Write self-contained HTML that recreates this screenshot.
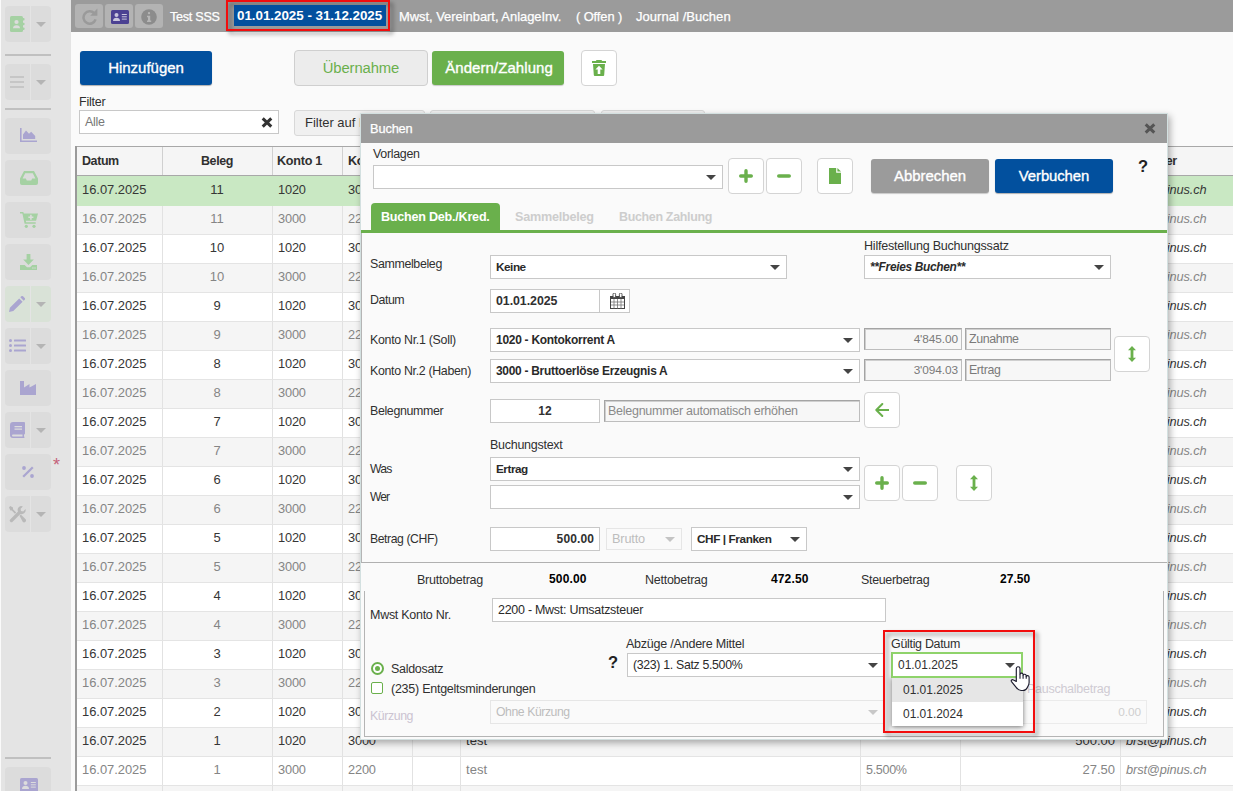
<!DOCTYPE html>
<html lang="de"><head><meta charset="utf-8"><title>Journal /Buchen</title>
<style>
html,body{margin:0;padding:0}
body{width:1233px;height:791px;overflow:hidden;position:relative;background:#fafafa;font-family:"Liberation Sans",sans-serif;font-size:13px;color:#303030;line-height:1}
*{box-sizing:border-box}
.a{position:absolute}
.t{position:absolute;white-space:nowrap;line-height:16px;height:16px}
.b{font-weight:bold}
.i{font-style:italic}
.sb{position:absolute;left:5px;width:46px;height:36px;background:#dcdcdc;border-radius:4px}
.sb i{position:absolute;left:25px;top:0;width:1px;height:36px;background:#e4e4e4}
.sb u{position:absolute;left:31px;top:16px;width:0;height:0;border-left:5px solid transparent;border-right:5px solid transparent;border-top:5px solid #b4b4b4}
.hr{position:absolute;left:5px;width:46px;height:2px;background:#c0c0c0}
.tb{position:absolute;top:4px;width:28px;height:24px;background:#b3b3b3;border-radius:3px}
.sel{position:absolute;background:#fff;border:1px solid #c8c8c8;height:24px}
.car{position:absolute;width:0;height:0;border-left:5px solid transparent;border-right:5px solid transparent;border-top:5px solid #444}
.ro{position:absolute;background:#f7f7f7;border:1px solid #a4a4a4;border-right-color:#bdbdbd;border-bottom-color:#bdbdbd;height:22px;box-shadow:inset 1px 1px 0 #cfcfcf}
.ib{position:absolute;width:36px;height:36px;background:#fff;border:1px solid #d4d4d4;border-radius:4px}
.row{position:absolute;left:77px;width:1156px;height:29px;border-top:1px solid #e4e4e4}
.row.e{background:#f5f5f5}
.row.o{background:#fff}
.row.s{background:#c9e8c3;border-top:none}
.g{color:#888}
.vl{position:absolute;top:147px;width:1px;height:644px;background:#e2e2e2}
</style></head>
<body>
<div class="a" style="left:1px;top:0;width:70px;height:791px;background:#e4e4e4"></div>
<div class="a" style="left:71px;top:0;width:1162px;height:32px;background:#9b9b9b"></div>
<div class="sb" style="top:6px;background:#dcdcdc"><i></i><u></u></div>
<svg class="a" style="left:10px;top:16px;" width="15" height="16" viewBox="0 0 15 16"><rect x="0" y="0" width="13" height="16" rx="1.5" fill="#a5d1a3"/><rect x="12.5" y="2" width="2" height="2.6" rx=".8" fill="#a5d1a3"/><rect x="12.5" y="6.7" width="2" height="2.6" rx=".8" fill="#a5d1a3"/><rect x="12.5" y="11.4" width="2" height="2.6" rx=".8" fill="#a5d1a3"/><circle cx="6.5" cy="6" r="2.1" fill="#dcdcdc"/><path d="M3 12.2c0-2 1.3-3 3.5-3s3.5 1 3.5 3z" fill="#dcdcdc"/></svg>
<div class="hr" style="top:54px"></div>
<div class="sb" style="top:64px;background:#dcdcdc"><i></i><u></u></div>
<div class="a" style="left:10px;top:76px;width:14px;height:2px;background:#c6c6c6"></div>
<div class="a" style="left:10px;top:81px;width:14px;height:2px;background:#c6c6c6"></div>
<div class="a" style="left:10px;top:86px;width:14px;height:2px;background:#c6c6c6"></div>
<div class="hr" style="top:108px"></div>
<div class="sb" style="top:118px;background:#dcdcdc"></div>
<svg class="a" style="left:20px;top:128px;" width="17" height="14" viewBox="0 0 17 14"><path d="M0 0h1.6v12.4H17V14H0z" fill="#aaa5d0"/><path d="M3 11V6.5l3-4 3 3.2 2.2-2 4 4.3V11z" fill="#aaa5d0"/></svg>
<div class="sb" style="top:160px;background:#dcdcdc"></div>
<svg class="a" style="left:20px;top:171px;" width="18" height="14" viewBox="0 0 18 14"><path d="M4 0h10l4 7.5V12a2 2 0 0 1-2 2H2a2 2 0 0 1-2-2V7.5zM5.2 2.2L2.6 7.4h3.2l1 2h4.4l1-2h3.2L12.8 2.2z" fill="#a5d1a3" fill-rule="evenodd"/></svg>
<div class="sb" style="top:202px;background:#dcdcdc"></div>
<svg class="a" style="left:20px;top:212px;" width="18" height="16" viewBox="0 0 18 16"><path d="M0 0h3.3l.5 1.6H18l-1.9 7.2H5.8l.3 1.4h9.6v1.6H4.6L2.4 1.6H0z" fill="#a5d1a3"/><circle cx="6.3" cy="14.3" r="1.6" fill="#a5d1a3"/><circle cx="14" cy="14.3" r="1.6" fill="#a5d1a3"/><path d="M10.1 2.7h1.6v1.7h1.7V6h-1.7v1.7h-1.6V6H8.4V4.4h1.7z" fill="#dcdcdc"/></svg>
<div class="sb" style="top:244px;background:#dcdcdc"></div>
<svg class="a" style="left:20px;top:254px;" width="17" height="16" viewBox="0 0 17 16"><path d="M6.6 0h3.8v5.6h3.4L8.5 11 3.2 5.600h3.400z" fill="#a5d1a3"/><path d="M0 11h4.600l2.400 2.300h3l2.400-2.300H17V16H0z" fill="#a5d1a3"/><rect x="12.300" y="13.400" width="1.200" height="1.200" fill="#dcdcdc"/><rect x="14.400" y="13.400" width="1.200" height="1.200" fill="#dcdcdc"/></svg>
<div class="sb" style="top:286px;background:#d9e2d7"><i></i><u></u></div>
<svg class="a" style="left:9px;top:296px;" width="16" height="16" viewBox="0 0 16 16"><path d="M0 16l.9-4.300L10.200 2.400l3.400 3.400L4.300 15.100zM11.300 1.300l1-1a1.200 1.200 0 0 1 1.700 0l1.700 1.700a1.200 1.200 0 0 1 0 1.700l-1 1z" fill="#aaa5d0"/></svg>
<div class="sb" style="top:328px;background:#dcdcdc"><i></i><u></u></div>
<svg class="a" style="left:9px;top:339px;" width="17" height="13" viewBox="0 0 17 13"><circle cx="1.500" cy="1.500" r="1.500" fill="#aaa5d0"/><circle cx="1.500" cy="6.500" r="1.500" fill="#aaa5d0"/><circle cx="1.500" cy="11.500" r="1.500" fill="#aaa5d0"/><rect x="5" y=".5" width="12" height="2" rx=".5" fill="#aaa5d0"/><rect x="5" y="5.500" width="12" height="2" rx=".5" fill="#aaa5d0"/><rect x="5" y="10.500" width="12" height="2" rx=".5" fill="#aaa5d0"/></svg>
<div class="sb" style="top:370px;background:#dcdcdc"></div>
<svg class="a" style="left:20px;top:381px;" width="16" height="14" viewBox="0 0 16 14"><path d="M0 0h4v6.500L9.500 3v3.500L16 3v11H0z" fill="#aaa5d0"/></svg>
<div class="sb" style="top:412px;background:#dcdcdc"><i></i><u></u></div>
<svg class="a" style="left:10px;top:422px;" width="15" height="16" viewBox="0 0 15 16"><path d="M3 0h11a1 1 0 0 1 1 1v10.500a1 1 0 0 1-1 1v2a.8.800 0 0 1 0 1.500H3a3 3 0 0 1-3-3V3a3 3 0 0 1 3-3zM3 12.500a1 1 0 0 0 0 2h9.500v-2zM4.500 4v1.200h7.500V4zM4.500 6.500v1.200h7.500V6.500z" fill="#aaa5d0" fill-rule="evenodd"/></svg>
<div class="sb" style="top:454px;background:#dcdcdc"></div>
<svg class="a" style="left:22px;top:466px;" width="12" height="12" viewBox="0 0 12 12"><circle cx="2" cy="2" r="1.900" fill="#aaa5d0"/><circle cx="10" cy="10" r="1.900" fill="#aaa5d0"/><path d="M10 .4L11.600 2 2 11.600.4 10z" fill="#aaa5d0"/></svg>
<div class="t" style="left:53px;top:457px;font-size:18.00px;letter-spacing:0.000px;color:#c4627a;">*</div>
<div class="sb" style="top:496px;background:#dcdcdc"><i></i><u></u></div>
<svg class="a" style="left:9px;top:506px;" width="17" height="17" viewBox="0 0 17 17"><path d="M1.200 0L4 1.600v1.600l3.200 3.200-1.300 1.300L2.800 4.500H1.400L0 1.500zM11.900 0a4 4 0 0 1 2 .500L11.600 2.800l.4 2.200 2.200.400L16.500 3.100A4 4 0 0 1 11.400 8L3.600 15.800a1.700 1.700 0 0 1-2.400-2.400L9 5.600A4 4 0 0 1 11.900 0zM10.500 9.800l1.300-1.300 4.600 4.600a1.900 1.900 0 0 1-2.700 2.700z" fill="#b9b9b9"/></svg>
<div class="hr" style="top:757px"></div>
<div class="sb" style="top:767px;background:#dcdcdc"></div>
<svg class="a" style="left:20px;top:778px;" width="18" height="14" viewBox="0 0 18 14"><rect width="18" height="14" rx="1.500" fill="#aaa5d0"/><circle cx="5.500" cy="5" r="2" fill="#dcdcdc"/><path d="M2 11c0-2.200 1.400-3.200 3.500-3.200S9 8.800 9 11z" fill="#dcdcdc"/><rect x="10.800" y="4" width="5" height="1" fill="#dcdcdc"/><rect x="10.800" y="6.300" width="5" height="1" fill="#dcdcdc"/><rect x="10.800" y="8.600" width="5" height="1" fill="#dcdcdc"/></svg>
<div class="tb" style="left:75px"></div>
<div class="tb" style="left:105px"></div>
<div class="tb" style="left:135px"></div>
<svg class="a" style="left:81px;top:8px;" width="17" height="17" viewBox="0 0 17 17"><path d="M13.300 5.300A6.200 6.200 0 1 0 14.600 11.400" fill="none" stroke="#9a9a9a" stroke-width="2.500"/><path d="M16.400 .600v7.200H9.200z" fill="#9a9a9a"/></svg>
<svg class="a" style="left:111px;top:10px;" width="18" height="14" viewBox="0 0 18 14"><rect width="18" height="14" rx="1.500" fill="#4b4192"/><circle cx="5.500" cy="5" r="2" fill="#c9c6dd"/><path d="M2 11c0-2.200 1.400-3.200 3.500-3.200S9 8.800 9 11z" fill="#c9c6dd"/><rect x="10.800" y="4" width="5" height="1" fill="#c9c6dd"/><rect x="10.800" y="6.300" width="5" height="1" fill="#c9c6dd"/><rect x="10.800" y="8.600" width="5" height="1" fill="#c9c6dd"/></svg>
<svg class="a" style="left:141px;top:9px;" width="16" height="16" viewBox="0 0 16 16"><circle cx="8" cy="8" r="7.800" fill="#8c8c8c"/><rect x="6.900" y="3" width="2.200" height="2.200" rx="1" fill="#b6b6b6"/><path d="M6 6.800h3.200v4.700h1V13H6v-1.500h1V8.300H6z" fill="#b6b6b6"/></svg>
<div class="t" style="left:170px;top:9px;font-size:12.58px;letter-spacing:-0.250px;color:#fff;-webkit-text-stroke:.25px #fff;">Test SSS</div>
<div class="a" style="left:226px;top:0;width:164px;height:31px;border:2px solid #f20d0d;filter:drop-shadow(3px 3px 2px rgba(0,0,0,.42))"></div>
<div class="a" style="left:234px;top:5px;width:152px;height:21px;background:#02509e"></div>
<div class="t b" style="left:237px;top:8px;font-size:13.42px;letter-spacing:-0.040px;color:#fff;">01.01.2025 - 31.12.2025</div>
<div class="t" style="left:399px;top:9px;font-size:12.94px;letter-spacing:-0.026px;color:#fff;-webkit-text-stroke:.25px #fff;">Mwst, Vereinbart, AnlageInv.</div>
<div class="t" style="left:576px;top:9px;font-size:12.83px;letter-spacing:-0.078px;color:#fff;-webkit-text-stroke:.25px #fff;">( Offen )</div>
<div class="t" style="left:636px;top:9px;font-size:13.00px;letter-spacing:0.048px;color:#fff;-webkit-text-stroke:.25px #fff;">Journal /Buchen</div>
<div class="a" style="left:80px;top:51px;width:132px;height:34px;background:#02509e;border-radius:3px;box-shadow:0 1px 1px rgba(0,0,0,.3)"></div>
<div class="t" style="left:80px;top:60px;font-size:14.99px;letter-spacing:-0.006px;color:#fff;width:132px;text-align:center;padding-left:-0.006px;-webkit-text-stroke:.35px #fff;">Hinzufügen</div>
<div class="a" style="left:294px;top:50px;width:134px;height:36px;background:#ececec;border:1px solid #cfcfcf;border-radius:4px"></div>
<div class="t" style="left:294px;top:60px;font-size:14.83px;letter-spacing:-0.111px;color:#6ab04c;width:134px;text-align:center;padding-left:-0.111px;">Übernahme</div>
<div class="a" style="left:432px;top:51px;width:132px;height:34px;background:#6ab04c;border-radius:3px;box-shadow:0 1px 1px rgba(0,0,0,.2)"></div>
<div class="t" style="left:433px;top:60px;font-size:15.00px;letter-spacing:0.067px;color:#fff;width:132px;text-align:center;padding-left:0.067px;-webkit-text-stroke:.35px #fff;">Ändern/Zahlung</div>
<div class="ib" style="left:581px;top:50px"></div>
<div class="t" style="left:79px;top:94px;font-size:12.48px;letter-spacing:-0.231px;">Filter</div>
<div class="a" style="left:79px;top:110px;width:200px;height:24px;background:#fff;border:1px solid #c8c8c8"></div>
<div class="t" style="left:85px;top:114px;font-size:12.48px;letter-spacing:-0.289px;color:#777;">Alle</div>
<svg class="a" style="left:261px;top:117px;" width="12" height="11" viewBox="0 0 12 11"><path d="M1.700 1.400l8.600 8.200M10.300 1.400l-8.600 8.200" stroke="#333" stroke-width="3" stroke-linecap="butt"/></svg>
<div class="a" style="left:294px;top:110px;width:131px;height:26px;background:#f0f0f0;border:1px solid #d8d8d8;border-radius:3px"></div>
<div class="a" style="left:430px;top:110px;width:165px;height:26px;background:#f0f0f0;border:1px solid #d8d8d8;border-radius:3px"></div>
<div class="a" style="left:601px;top:110px;width:104px;height:26px;background:#f0f0f0;border:1px solid #d8d8d8;border-radius:3px"></div>
<div class="t" style="left:305px;top:115px;font-size:12.98px;letter-spacing:-0.010px;">Filter auf Datum</div>
<div class="a" style="left:75px;top:146px;width:1158px;height:645px;background:#fff"></div>
<div class="a" style="left:77px;top:147px;width:1156px;height:28px;background:#f5f5f5"></div>
<div class="vl" style="left:162px"></div>
<div class="vl" style="left:272px"></div>
<div class="vl" style="left:342px"></div>
<div class="vl" style="left:412px"></div>
<div class="vl" style="left:460px"></div>
<div class="vl" style="left:860px"></div>
<div class="vl" style="left:960px"></div>
<div class="vl" style="left:1120px"></div>
<div class="row s" style="top:176px"></div>
<div class="t" style="left:82px;top:182px;font-size:12.94px;letter-spacing:-0.031px;color:#363636;">16.07.2025</div>
<div class="t" style="left:162px;top:182px;font-size:13.00px;letter-spacing:0.000px;color:#363636;width:110px;text-align:center;padding-left:0.000px;">11</div>
<div class="t" style="left:278px;top:182px;font-size:12.79px;letter-spacing:-0.154px;color:#363636;">1020</div>
<div class="t" style="left:348px;top:182px;font-size:12.79px;letter-spacing:-0.154px;color:#363636;">3000</div>
<div class="t" style="left:466px;top:182px;font-size:13.00px;letter-spacing:0.023px;color:#363636;">test</div>
<div class="t" style="left:866px;top:182px;font-size:13.00px;letter-spacing:41.000px;color:#363636;"></div>
<div class="t" style="left:961px;top:182px;font-size:13.00px;letter-spacing:0.000px;color:#363636;width:154px;text-align:right;margin-left:0.000px;">500.00</div>
<div class="t i" style="left:1126px;top:182px;font-size:12.79px;letter-spacing:-0.111px;color:#363636;">brst@pinus.ch</div>
<div class="row e" style="top:205px;border-top-color:#c9e8c3"></div>
<div class="a" style="left:162px;top:206px;width:1px;height:28px;background:#e2e2e2"></div>
<div class="a" style="left:272px;top:206px;width:1px;height:28px;background:#e2e2e2"></div>
<div class="a" style="left:342px;top:206px;width:1px;height:28px;background:#e2e2e2"></div>
<div class="a" style="left:412px;top:206px;width:1px;height:28px;background:#e2e2e2"></div>
<div class="a" style="left:460px;top:206px;width:1px;height:28px;background:#e2e2e2"></div>
<div class="a" style="left:860px;top:206px;width:1px;height:28px;background:#e2e2e2"></div>
<div class="a" style="left:960px;top:206px;width:1px;height:28px;background:#e2e2e2"></div>
<div class="a" style="left:1120px;top:206px;width:1px;height:28px;background:#e2e2e2"></div>
<div class="t" style="left:82px;top:211px;font-size:12.94px;letter-spacing:-0.031px;color:#858585;">16.07.2025</div>
<div class="t" style="left:162px;top:211px;font-size:13.00px;letter-spacing:0.000px;color:#858585;width:110px;text-align:center;padding-left:0.000px;">11</div>
<div class="t" style="left:278px;top:211px;font-size:12.79px;letter-spacing:-0.154px;color:#858585;">3000</div>
<div class="t" style="left:348px;top:211px;font-size:12.79px;letter-spacing:-0.154px;color:#858585;">2200</div>
<div class="t" style="left:466px;top:211px;font-size:13.00px;letter-spacing:0.023px;color:#858585;">test</div>
<div class="t" style="left:866px;top:211px;font-size:12.55px;letter-spacing:-0.307px;color:#858585;">5.500%</div>
<div class="t" style="left:961px;top:211px;font-size:13.00px;letter-spacing:0.000px;color:#858585;width:154px;text-align:right;margin-left:0.000px;">27.50</div>
<div class="t i" style="left:1126px;top:211px;font-size:12.79px;letter-spacing:-0.111px;color:#858585;">brst@pinus.ch</div>
<div class="row o" style="top:234px"></div>
<div class="a" style="left:162px;top:235px;width:1px;height:28px;background:#e2e2e2"></div>
<div class="a" style="left:272px;top:235px;width:1px;height:28px;background:#e2e2e2"></div>
<div class="a" style="left:342px;top:235px;width:1px;height:28px;background:#e2e2e2"></div>
<div class="a" style="left:412px;top:235px;width:1px;height:28px;background:#e2e2e2"></div>
<div class="a" style="left:460px;top:235px;width:1px;height:28px;background:#e2e2e2"></div>
<div class="a" style="left:860px;top:235px;width:1px;height:28px;background:#e2e2e2"></div>
<div class="a" style="left:960px;top:235px;width:1px;height:28px;background:#e2e2e2"></div>
<div class="a" style="left:1120px;top:235px;width:1px;height:28px;background:#e2e2e2"></div>
<div class="t" style="left:82px;top:240px;font-size:12.94px;letter-spacing:-0.031px;color:#363636;">16.07.2025</div>
<div class="t" style="left:162px;top:240px;font-size:13.00px;letter-spacing:0.000px;color:#363636;width:110px;text-align:center;padding-left:0.000px;">10</div>
<div class="t" style="left:278px;top:240px;font-size:12.79px;letter-spacing:-0.154px;color:#363636;">1020</div>
<div class="t" style="left:348px;top:240px;font-size:12.79px;letter-spacing:-0.154px;color:#363636;">3000</div>
<div class="t" style="left:466px;top:240px;font-size:13.00px;letter-spacing:0.023px;color:#363636;">test</div>
<div class="t" style="left:866px;top:240px;font-size:13.00px;letter-spacing:41.000px;color:#363636;"></div>
<div class="t" style="left:961px;top:240px;font-size:13.00px;letter-spacing:0.000px;color:#363636;width:154px;text-align:right;margin-left:0.000px;">500.00</div>
<div class="t i" style="left:1126px;top:240px;font-size:12.79px;letter-spacing:-0.111px;color:#363636;">brst@pinus.ch</div>
<div class="row e" style="top:263px"></div>
<div class="a" style="left:162px;top:264px;width:1px;height:28px;background:#e2e2e2"></div>
<div class="a" style="left:272px;top:264px;width:1px;height:28px;background:#e2e2e2"></div>
<div class="a" style="left:342px;top:264px;width:1px;height:28px;background:#e2e2e2"></div>
<div class="a" style="left:412px;top:264px;width:1px;height:28px;background:#e2e2e2"></div>
<div class="a" style="left:460px;top:264px;width:1px;height:28px;background:#e2e2e2"></div>
<div class="a" style="left:860px;top:264px;width:1px;height:28px;background:#e2e2e2"></div>
<div class="a" style="left:960px;top:264px;width:1px;height:28px;background:#e2e2e2"></div>
<div class="a" style="left:1120px;top:264px;width:1px;height:28px;background:#e2e2e2"></div>
<div class="t" style="left:82px;top:269px;font-size:12.94px;letter-spacing:-0.031px;color:#858585;">16.07.2025</div>
<div class="t" style="left:162px;top:269px;font-size:13.00px;letter-spacing:0.000px;color:#858585;width:110px;text-align:center;padding-left:0.000px;">10</div>
<div class="t" style="left:278px;top:269px;font-size:12.79px;letter-spacing:-0.154px;color:#858585;">3000</div>
<div class="t" style="left:348px;top:269px;font-size:12.79px;letter-spacing:-0.154px;color:#858585;">2200</div>
<div class="t" style="left:466px;top:269px;font-size:13.00px;letter-spacing:0.023px;color:#858585;">test</div>
<div class="t" style="left:866px;top:269px;font-size:12.55px;letter-spacing:-0.307px;color:#858585;">5.500%</div>
<div class="t" style="left:961px;top:269px;font-size:13.00px;letter-spacing:0.000px;color:#858585;width:154px;text-align:right;margin-left:0.000px;">27.50</div>
<div class="t i" style="left:1126px;top:269px;font-size:12.79px;letter-spacing:-0.111px;color:#858585;">brst@pinus.ch</div>
<div class="row o" style="top:292px"></div>
<div class="a" style="left:162px;top:293px;width:1px;height:28px;background:#e2e2e2"></div>
<div class="a" style="left:272px;top:293px;width:1px;height:28px;background:#e2e2e2"></div>
<div class="a" style="left:342px;top:293px;width:1px;height:28px;background:#e2e2e2"></div>
<div class="a" style="left:412px;top:293px;width:1px;height:28px;background:#e2e2e2"></div>
<div class="a" style="left:460px;top:293px;width:1px;height:28px;background:#e2e2e2"></div>
<div class="a" style="left:860px;top:293px;width:1px;height:28px;background:#e2e2e2"></div>
<div class="a" style="left:960px;top:293px;width:1px;height:28px;background:#e2e2e2"></div>
<div class="a" style="left:1120px;top:293px;width:1px;height:28px;background:#e2e2e2"></div>
<div class="t" style="left:82px;top:298px;font-size:12.94px;letter-spacing:-0.031px;color:#363636;">16.07.2025</div>
<div class="t" style="left:162px;top:298px;font-size:13.00px;letter-spacing:0.000px;color:#363636;width:110px;text-align:center;padding-left:0.000px;">9</div>
<div class="t" style="left:278px;top:298px;font-size:12.79px;letter-spacing:-0.154px;color:#363636;">1020</div>
<div class="t" style="left:348px;top:298px;font-size:12.79px;letter-spacing:-0.154px;color:#363636;">3000</div>
<div class="t" style="left:466px;top:298px;font-size:13.00px;letter-spacing:0.023px;color:#363636;">test</div>
<div class="t" style="left:866px;top:298px;font-size:13.00px;letter-spacing:41.000px;color:#363636;"></div>
<div class="t" style="left:961px;top:298px;font-size:13.00px;letter-spacing:0.000px;color:#363636;width:154px;text-align:right;margin-left:0.000px;">500.00</div>
<div class="t i" style="left:1126px;top:298px;font-size:12.79px;letter-spacing:-0.111px;color:#363636;">brst@pinus.ch</div>
<div class="row e" style="top:321px"></div>
<div class="a" style="left:162px;top:322px;width:1px;height:28px;background:#e2e2e2"></div>
<div class="a" style="left:272px;top:322px;width:1px;height:28px;background:#e2e2e2"></div>
<div class="a" style="left:342px;top:322px;width:1px;height:28px;background:#e2e2e2"></div>
<div class="a" style="left:412px;top:322px;width:1px;height:28px;background:#e2e2e2"></div>
<div class="a" style="left:460px;top:322px;width:1px;height:28px;background:#e2e2e2"></div>
<div class="a" style="left:860px;top:322px;width:1px;height:28px;background:#e2e2e2"></div>
<div class="a" style="left:960px;top:322px;width:1px;height:28px;background:#e2e2e2"></div>
<div class="a" style="left:1120px;top:322px;width:1px;height:28px;background:#e2e2e2"></div>
<div class="t" style="left:82px;top:327px;font-size:12.94px;letter-spacing:-0.031px;color:#858585;">16.07.2025</div>
<div class="t" style="left:162px;top:327px;font-size:13.00px;letter-spacing:0.000px;color:#858585;width:110px;text-align:center;padding-left:0.000px;">9</div>
<div class="t" style="left:278px;top:327px;font-size:12.79px;letter-spacing:-0.154px;color:#858585;">3000</div>
<div class="t" style="left:348px;top:327px;font-size:12.79px;letter-spacing:-0.154px;color:#858585;">2200</div>
<div class="t" style="left:466px;top:327px;font-size:13.00px;letter-spacing:0.023px;color:#858585;">test</div>
<div class="t" style="left:866px;top:327px;font-size:12.55px;letter-spacing:-0.307px;color:#858585;">5.500%</div>
<div class="t" style="left:961px;top:327px;font-size:13.00px;letter-spacing:0.000px;color:#858585;width:154px;text-align:right;margin-left:0.000px;">27.50</div>
<div class="t i" style="left:1126px;top:327px;font-size:12.79px;letter-spacing:-0.111px;color:#858585;">brst@pinus.ch</div>
<div class="row o" style="top:350px"></div>
<div class="a" style="left:162px;top:351px;width:1px;height:28px;background:#e2e2e2"></div>
<div class="a" style="left:272px;top:351px;width:1px;height:28px;background:#e2e2e2"></div>
<div class="a" style="left:342px;top:351px;width:1px;height:28px;background:#e2e2e2"></div>
<div class="a" style="left:412px;top:351px;width:1px;height:28px;background:#e2e2e2"></div>
<div class="a" style="left:460px;top:351px;width:1px;height:28px;background:#e2e2e2"></div>
<div class="a" style="left:860px;top:351px;width:1px;height:28px;background:#e2e2e2"></div>
<div class="a" style="left:960px;top:351px;width:1px;height:28px;background:#e2e2e2"></div>
<div class="a" style="left:1120px;top:351px;width:1px;height:28px;background:#e2e2e2"></div>
<div class="t" style="left:82px;top:356px;font-size:12.94px;letter-spacing:-0.031px;color:#363636;">16.07.2025</div>
<div class="t" style="left:162px;top:356px;font-size:13.00px;letter-spacing:0.000px;color:#363636;width:110px;text-align:center;padding-left:0.000px;">8</div>
<div class="t" style="left:278px;top:356px;font-size:12.79px;letter-spacing:-0.154px;color:#363636;">1020</div>
<div class="t" style="left:348px;top:356px;font-size:12.79px;letter-spacing:-0.154px;color:#363636;">3000</div>
<div class="t" style="left:466px;top:356px;font-size:13.00px;letter-spacing:0.023px;color:#363636;">test</div>
<div class="t" style="left:866px;top:356px;font-size:13.00px;letter-spacing:41.000px;color:#363636;"></div>
<div class="t" style="left:961px;top:356px;font-size:13.00px;letter-spacing:0.000px;color:#363636;width:154px;text-align:right;margin-left:0.000px;">500.00</div>
<div class="t i" style="left:1126px;top:356px;font-size:12.79px;letter-spacing:-0.111px;color:#363636;">brst@pinus.ch</div>
<div class="row e" style="top:379px"></div>
<div class="a" style="left:162px;top:380px;width:1px;height:28px;background:#e2e2e2"></div>
<div class="a" style="left:272px;top:380px;width:1px;height:28px;background:#e2e2e2"></div>
<div class="a" style="left:342px;top:380px;width:1px;height:28px;background:#e2e2e2"></div>
<div class="a" style="left:412px;top:380px;width:1px;height:28px;background:#e2e2e2"></div>
<div class="a" style="left:460px;top:380px;width:1px;height:28px;background:#e2e2e2"></div>
<div class="a" style="left:860px;top:380px;width:1px;height:28px;background:#e2e2e2"></div>
<div class="a" style="left:960px;top:380px;width:1px;height:28px;background:#e2e2e2"></div>
<div class="a" style="left:1120px;top:380px;width:1px;height:28px;background:#e2e2e2"></div>
<div class="t" style="left:82px;top:385px;font-size:12.94px;letter-spacing:-0.031px;color:#858585;">16.07.2025</div>
<div class="t" style="left:162px;top:385px;font-size:13.00px;letter-spacing:0.000px;color:#858585;width:110px;text-align:center;padding-left:0.000px;">8</div>
<div class="t" style="left:278px;top:385px;font-size:12.79px;letter-spacing:-0.154px;color:#858585;">3000</div>
<div class="t" style="left:348px;top:385px;font-size:12.79px;letter-spacing:-0.154px;color:#858585;">2200</div>
<div class="t" style="left:466px;top:385px;font-size:13.00px;letter-spacing:0.023px;color:#858585;">test</div>
<div class="t" style="left:866px;top:385px;font-size:12.55px;letter-spacing:-0.307px;color:#858585;">5.500%</div>
<div class="t" style="left:961px;top:385px;font-size:13.00px;letter-spacing:0.000px;color:#858585;width:154px;text-align:right;margin-left:0.000px;">27.50</div>
<div class="t i" style="left:1126px;top:385px;font-size:12.79px;letter-spacing:-0.111px;color:#858585;">brst@pinus.ch</div>
<div class="row o" style="top:408px"></div>
<div class="a" style="left:162px;top:409px;width:1px;height:28px;background:#e2e2e2"></div>
<div class="a" style="left:272px;top:409px;width:1px;height:28px;background:#e2e2e2"></div>
<div class="a" style="left:342px;top:409px;width:1px;height:28px;background:#e2e2e2"></div>
<div class="a" style="left:412px;top:409px;width:1px;height:28px;background:#e2e2e2"></div>
<div class="a" style="left:460px;top:409px;width:1px;height:28px;background:#e2e2e2"></div>
<div class="a" style="left:860px;top:409px;width:1px;height:28px;background:#e2e2e2"></div>
<div class="a" style="left:960px;top:409px;width:1px;height:28px;background:#e2e2e2"></div>
<div class="a" style="left:1120px;top:409px;width:1px;height:28px;background:#e2e2e2"></div>
<div class="t" style="left:82px;top:414px;font-size:12.94px;letter-spacing:-0.031px;color:#363636;">16.07.2025</div>
<div class="t" style="left:162px;top:414px;font-size:13.00px;letter-spacing:0.000px;color:#363636;width:110px;text-align:center;padding-left:0.000px;">7</div>
<div class="t" style="left:278px;top:414px;font-size:12.79px;letter-spacing:-0.154px;color:#363636;">1020</div>
<div class="t" style="left:348px;top:414px;font-size:12.79px;letter-spacing:-0.154px;color:#363636;">3000</div>
<div class="t" style="left:466px;top:414px;font-size:13.00px;letter-spacing:0.023px;color:#363636;">test</div>
<div class="t" style="left:866px;top:414px;font-size:13.00px;letter-spacing:41.000px;color:#363636;"></div>
<div class="t" style="left:961px;top:414px;font-size:13.00px;letter-spacing:0.000px;color:#363636;width:154px;text-align:right;margin-left:0.000px;">500.00</div>
<div class="t i" style="left:1126px;top:414px;font-size:12.79px;letter-spacing:-0.111px;color:#363636;">brst@pinus.ch</div>
<div class="row e" style="top:437px"></div>
<div class="a" style="left:162px;top:438px;width:1px;height:28px;background:#e2e2e2"></div>
<div class="a" style="left:272px;top:438px;width:1px;height:28px;background:#e2e2e2"></div>
<div class="a" style="left:342px;top:438px;width:1px;height:28px;background:#e2e2e2"></div>
<div class="a" style="left:412px;top:438px;width:1px;height:28px;background:#e2e2e2"></div>
<div class="a" style="left:460px;top:438px;width:1px;height:28px;background:#e2e2e2"></div>
<div class="a" style="left:860px;top:438px;width:1px;height:28px;background:#e2e2e2"></div>
<div class="a" style="left:960px;top:438px;width:1px;height:28px;background:#e2e2e2"></div>
<div class="a" style="left:1120px;top:438px;width:1px;height:28px;background:#e2e2e2"></div>
<div class="t" style="left:82px;top:443px;font-size:12.94px;letter-spacing:-0.031px;color:#858585;">16.07.2025</div>
<div class="t" style="left:162px;top:443px;font-size:13.00px;letter-spacing:0.000px;color:#858585;width:110px;text-align:center;padding-left:0.000px;">7</div>
<div class="t" style="left:278px;top:443px;font-size:12.79px;letter-spacing:-0.154px;color:#858585;">3000</div>
<div class="t" style="left:348px;top:443px;font-size:12.79px;letter-spacing:-0.154px;color:#858585;">2200</div>
<div class="t" style="left:466px;top:443px;font-size:13.00px;letter-spacing:0.023px;color:#858585;">test</div>
<div class="t" style="left:866px;top:443px;font-size:12.55px;letter-spacing:-0.307px;color:#858585;">5.500%</div>
<div class="t" style="left:961px;top:443px;font-size:13.00px;letter-spacing:0.000px;color:#858585;width:154px;text-align:right;margin-left:0.000px;">27.50</div>
<div class="t i" style="left:1126px;top:443px;font-size:12.79px;letter-spacing:-0.111px;color:#858585;">brst@pinus.ch</div>
<div class="row o" style="top:466px"></div>
<div class="a" style="left:162px;top:467px;width:1px;height:28px;background:#e2e2e2"></div>
<div class="a" style="left:272px;top:467px;width:1px;height:28px;background:#e2e2e2"></div>
<div class="a" style="left:342px;top:467px;width:1px;height:28px;background:#e2e2e2"></div>
<div class="a" style="left:412px;top:467px;width:1px;height:28px;background:#e2e2e2"></div>
<div class="a" style="left:460px;top:467px;width:1px;height:28px;background:#e2e2e2"></div>
<div class="a" style="left:860px;top:467px;width:1px;height:28px;background:#e2e2e2"></div>
<div class="a" style="left:960px;top:467px;width:1px;height:28px;background:#e2e2e2"></div>
<div class="a" style="left:1120px;top:467px;width:1px;height:28px;background:#e2e2e2"></div>
<div class="t" style="left:82px;top:472px;font-size:12.94px;letter-spacing:-0.031px;color:#363636;">16.07.2025</div>
<div class="t" style="left:162px;top:472px;font-size:13.00px;letter-spacing:0.000px;color:#363636;width:110px;text-align:center;padding-left:0.000px;">6</div>
<div class="t" style="left:278px;top:472px;font-size:12.79px;letter-spacing:-0.154px;color:#363636;">1020</div>
<div class="t" style="left:348px;top:472px;font-size:12.79px;letter-spacing:-0.154px;color:#363636;">3000</div>
<div class="t" style="left:466px;top:472px;font-size:13.00px;letter-spacing:0.023px;color:#363636;">test</div>
<div class="t" style="left:866px;top:472px;font-size:13.00px;letter-spacing:41.000px;color:#363636;"></div>
<div class="t" style="left:961px;top:472px;font-size:13.00px;letter-spacing:0.000px;color:#363636;width:154px;text-align:right;margin-left:0.000px;">500.00</div>
<div class="t i" style="left:1126px;top:472px;font-size:12.79px;letter-spacing:-0.111px;color:#363636;">brst@pinus.ch</div>
<div class="row e" style="top:495px"></div>
<div class="a" style="left:162px;top:496px;width:1px;height:28px;background:#e2e2e2"></div>
<div class="a" style="left:272px;top:496px;width:1px;height:28px;background:#e2e2e2"></div>
<div class="a" style="left:342px;top:496px;width:1px;height:28px;background:#e2e2e2"></div>
<div class="a" style="left:412px;top:496px;width:1px;height:28px;background:#e2e2e2"></div>
<div class="a" style="left:460px;top:496px;width:1px;height:28px;background:#e2e2e2"></div>
<div class="a" style="left:860px;top:496px;width:1px;height:28px;background:#e2e2e2"></div>
<div class="a" style="left:960px;top:496px;width:1px;height:28px;background:#e2e2e2"></div>
<div class="a" style="left:1120px;top:496px;width:1px;height:28px;background:#e2e2e2"></div>
<div class="t" style="left:82px;top:501px;font-size:12.94px;letter-spacing:-0.031px;color:#858585;">16.07.2025</div>
<div class="t" style="left:162px;top:501px;font-size:13.00px;letter-spacing:0.000px;color:#858585;width:110px;text-align:center;padding-left:0.000px;">6</div>
<div class="t" style="left:278px;top:501px;font-size:12.79px;letter-spacing:-0.154px;color:#858585;">3000</div>
<div class="t" style="left:348px;top:501px;font-size:12.79px;letter-spacing:-0.154px;color:#858585;">2200</div>
<div class="t" style="left:466px;top:501px;font-size:13.00px;letter-spacing:0.023px;color:#858585;">test</div>
<div class="t" style="left:866px;top:501px;font-size:12.55px;letter-spacing:-0.307px;color:#858585;">5.500%</div>
<div class="t" style="left:961px;top:501px;font-size:13.00px;letter-spacing:0.000px;color:#858585;width:154px;text-align:right;margin-left:0.000px;">27.50</div>
<div class="t i" style="left:1126px;top:501px;font-size:12.79px;letter-spacing:-0.111px;color:#858585;">brst@pinus.ch</div>
<div class="row o" style="top:524px"></div>
<div class="a" style="left:162px;top:525px;width:1px;height:28px;background:#e2e2e2"></div>
<div class="a" style="left:272px;top:525px;width:1px;height:28px;background:#e2e2e2"></div>
<div class="a" style="left:342px;top:525px;width:1px;height:28px;background:#e2e2e2"></div>
<div class="a" style="left:412px;top:525px;width:1px;height:28px;background:#e2e2e2"></div>
<div class="a" style="left:460px;top:525px;width:1px;height:28px;background:#e2e2e2"></div>
<div class="a" style="left:860px;top:525px;width:1px;height:28px;background:#e2e2e2"></div>
<div class="a" style="left:960px;top:525px;width:1px;height:28px;background:#e2e2e2"></div>
<div class="a" style="left:1120px;top:525px;width:1px;height:28px;background:#e2e2e2"></div>
<div class="t" style="left:82px;top:530px;font-size:12.94px;letter-spacing:-0.031px;color:#363636;">16.07.2025</div>
<div class="t" style="left:162px;top:530px;font-size:13.00px;letter-spacing:0.000px;color:#363636;width:110px;text-align:center;padding-left:0.000px;">5</div>
<div class="t" style="left:278px;top:530px;font-size:12.79px;letter-spacing:-0.154px;color:#363636;">1020</div>
<div class="t" style="left:348px;top:530px;font-size:12.79px;letter-spacing:-0.154px;color:#363636;">3000</div>
<div class="t" style="left:466px;top:530px;font-size:13.00px;letter-spacing:0.023px;color:#363636;">test</div>
<div class="t" style="left:866px;top:530px;font-size:13.00px;letter-spacing:41.000px;color:#363636;"></div>
<div class="t" style="left:961px;top:530px;font-size:13.00px;letter-spacing:0.000px;color:#363636;width:154px;text-align:right;margin-left:0.000px;">500.00</div>
<div class="t i" style="left:1126px;top:530px;font-size:12.79px;letter-spacing:-0.111px;color:#363636;">brst@pinus.ch</div>
<div class="row e" style="top:553px"></div>
<div class="a" style="left:162px;top:554px;width:1px;height:28px;background:#e2e2e2"></div>
<div class="a" style="left:272px;top:554px;width:1px;height:28px;background:#e2e2e2"></div>
<div class="a" style="left:342px;top:554px;width:1px;height:28px;background:#e2e2e2"></div>
<div class="a" style="left:412px;top:554px;width:1px;height:28px;background:#e2e2e2"></div>
<div class="a" style="left:460px;top:554px;width:1px;height:28px;background:#e2e2e2"></div>
<div class="a" style="left:860px;top:554px;width:1px;height:28px;background:#e2e2e2"></div>
<div class="a" style="left:960px;top:554px;width:1px;height:28px;background:#e2e2e2"></div>
<div class="a" style="left:1120px;top:554px;width:1px;height:28px;background:#e2e2e2"></div>
<div class="t" style="left:82px;top:559px;font-size:12.94px;letter-spacing:-0.031px;color:#858585;">16.07.2025</div>
<div class="t" style="left:162px;top:559px;font-size:13.00px;letter-spacing:0.000px;color:#858585;width:110px;text-align:center;padding-left:0.000px;">5</div>
<div class="t" style="left:278px;top:559px;font-size:12.79px;letter-spacing:-0.154px;color:#858585;">3000</div>
<div class="t" style="left:348px;top:559px;font-size:12.79px;letter-spacing:-0.154px;color:#858585;">2200</div>
<div class="t" style="left:466px;top:559px;font-size:13.00px;letter-spacing:0.023px;color:#858585;">test</div>
<div class="t" style="left:866px;top:559px;font-size:12.55px;letter-spacing:-0.307px;color:#858585;">5.500%</div>
<div class="t" style="left:961px;top:559px;font-size:13.00px;letter-spacing:0.000px;color:#858585;width:154px;text-align:right;margin-left:0.000px;">27.50</div>
<div class="t i" style="left:1126px;top:559px;font-size:12.79px;letter-spacing:-0.111px;color:#858585;">brst@pinus.ch</div>
<div class="row o" style="top:582px"></div>
<div class="a" style="left:162px;top:583px;width:1px;height:28px;background:#e2e2e2"></div>
<div class="a" style="left:272px;top:583px;width:1px;height:28px;background:#e2e2e2"></div>
<div class="a" style="left:342px;top:583px;width:1px;height:28px;background:#e2e2e2"></div>
<div class="a" style="left:412px;top:583px;width:1px;height:28px;background:#e2e2e2"></div>
<div class="a" style="left:460px;top:583px;width:1px;height:28px;background:#e2e2e2"></div>
<div class="a" style="left:860px;top:583px;width:1px;height:28px;background:#e2e2e2"></div>
<div class="a" style="left:960px;top:583px;width:1px;height:28px;background:#e2e2e2"></div>
<div class="a" style="left:1120px;top:583px;width:1px;height:28px;background:#e2e2e2"></div>
<div class="t" style="left:82px;top:588px;font-size:12.94px;letter-spacing:-0.031px;color:#363636;">16.07.2025</div>
<div class="t" style="left:162px;top:588px;font-size:13.00px;letter-spacing:0.000px;color:#363636;width:110px;text-align:center;padding-left:0.000px;">4</div>
<div class="t" style="left:278px;top:588px;font-size:12.79px;letter-spacing:-0.154px;color:#363636;">1020</div>
<div class="t" style="left:348px;top:588px;font-size:12.79px;letter-spacing:-0.154px;color:#363636;">3000</div>
<div class="t" style="left:466px;top:588px;font-size:13.00px;letter-spacing:0.023px;color:#363636;">test</div>
<div class="t" style="left:866px;top:588px;font-size:13.00px;letter-spacing:41.000px;color:#363636;"></div>
<div class="t" style="left:961px;top:588px;font-size:13.00px;letter-spacing:0.000px;color:#363636;width:154px;text-align:right;margin-left:0.000px;">500.00</div>
<div class="t i" style="left:1126px;top:588px;font-size:12.79px;letter-spacing:-0.111px;color:#363636;">brst@pinus.ch</div>
<div class="row e" style="top:611px"></div>
<div class="a" style="left:162px;top:612px;width:1px;height:28px;background:#e2e2e2"></div>
<div class="a" style="left:272px;top:612px;width:1px;height:28px;background:#e2e2e2"></div>
<div class="a" style="left:342px;top:612px;width:1px;height:28px;background:#e2e2e2"></div>
<div class="a" style="left:412px;top:612px;width:1px;height:28px;background:#e2e2e2"></div>
<div class="a" style="left:460px;top:612px;width:1px;height:28px;background:#e2e2e2"></div>
<div class="a" style="left:860px;top:612px;width:1px;height:28px;background:#e2e2e2"></div>
<div class="a" style="left:960px;top:612px;width:1px;height:28px;background:#e2e2e2"></div>
<div class="a" style="left:1120px;top:612px;width:1px;height:28px;background:#e2e2e2"></div>
<div class="t" style="left:82px;top:617px;font-size:12.94px;letter-spacing:-0.031px;color:#858585;">16.07.2025</div>
<div class="t" style="left:162px;top:617px;font-size:13.00px;letter-spacing:0.000px;color:#858585;width:110px;text-align:center;padding-left:0.000px;">4</div>
<div class="t" style="left:278px;top:617px;font-size:12.79px;letter-spacing:-0.154px;color:#858585;">3000</div>
<div class="t" style="left:348px;top:617px;font-size:12.79px;letter-spacing:-0.154px;color:#858585;">2200</div>
<div class="t" style="left:466px;top:617px;font-size:13.00px;letter-spacing:0.023px;color:#858585;">test</div>
<div class="t" style="left:866px;top:617px;font-size:12.55px;letter-spacing:-0.307px;color:#858585;">5.500%</div>
<div class="t" style="left:961px;top:617px;font-size:13.00px;letter-spacing:0.000px;color:#858585;width:154px;text-align:right;margin-left:0.000px;">27.50</div>
<div class="t i" style="left:1126px;top:617px;font-size:12.79px;letter-spacing:-0.111px;color:#858585;">brst@pinus.ch</div>
<div class="row o" style="top:640px"></div>
<div class="a" style="left:162px;top:641px;width:1px;height:28px;background:#e2e2e2"></div>
<div class="a" style="left:272px;top:641px;width:1px;height:28px;background:#e2e2e2"></div>
<div class="a" style="left:342px;top:641px;width:1px;height:28px;background:#e2e2e2"></div>
<div class="a" style="left:412px;top:641px;width:1px;height:28px;background:#e2e2e2"></div>
<div class="a" style="left:460px;top:641px;width:1px;height:28px;background:#e2e2e2"></div>
<div class="a" style="left:860px;top:641px;width:1px;height:28px;background:#e2e2e2"></div>
<div class="a" style="left:960px;top:641px;width:1px;height:28px;background:#e2e2e2"></div>
<div class="a" style="left:1120px;top:641px;width:1px;height:28px;background:#e2e2e2"></div>
<div class="t" style="left:82px;top:646px;font-size:12.94px;letter-spacing:-0.031px;color:#363636;">16.07.2025</div>
<div class="t" style="left:162px;top:646px;font-size:13.00px;letter-spacing:0.000px;color:#363636;width:110px;text-align:center;padding-left:0.000px;">3</div>
<div class="t" style="left:278px;top:646px;font-size:12.79px;letter-spacing:-0.154px;color:#363636;">1020</div>
<div class="t" style="left:348px;top:646px;font-size:12.79px;letter-spacing:-0.154px;color:#363636;">3000</div>
<div class="t" style="left:466px;top:646px;font-size:13.00px;letter-spacing:0.023px;color:#363636;">test</div>
<div class="t" style="left:866px;top:646px;font-size:13.00px;letter-spacing:41.000px;color:#363636;"></div>
<div class="t" style="left:961px;top:646px;font-size:13.00px;letter-spacing:0.000px;color:#363636;width:154px;text-align:right;margin-left:0.000px;">500.00</div>
<div class="t i" style="left:1126px;top:646px;font-size:12.79px;letter-spacing:-0.111px;color:#363636;">brst@pinus.ch</div>
<div class="row e" style="top:669px"></div>
<div class="a" style="left:162px;top:670px;width:1px;height:28px;background:#e2e2e2"></div>
<div class="a" style="left:272px;top:670px;width:1px;height:28px;background:#e2e2e2"></div>
<div class="a" style="left:342px;top:670px;width:1px;height:28px;background:#e2e2e2"></div>
<div class="a" style="left:412px;top:670px;width:1px;height:28px;background:#e2e2e2"></div>
<div class="a" style="left:460px;top:670px;width:1px;height:28px;background:#e2e2e2"></div>
<div class="a" style="left:860px;top:670px;width:1px;height:28px;background:#e2e2e2"></div>
<div class="a" style="left:960px;top:670px;width:1px;height:28px;background:#e2e2e2"></div>
<div class="a" style="left:1120px;top:670px;width:1px;height:28px;background:#e2e2e2"></div>
<div class="t" style="left:82px;top:675px;font-size:12.94px;letter-spacing:-0.031px;color:#858585;">16.07.2025</div>
<div class="t" style="left:162px;top:675px;font-size:13.00px;letter-spacing:0.000px;color:#858585;width:110px;text-align:center;padding-left:0.000px;">3</div>
<div class="t" style="left:278px;top:675px;font-size:12.79px;letter-spacing:-0.154px;color:#858585;">3000</div>
<div class="t" style="left:348px;top:675px;font-size:12.79px;letter-spacing:-0.154px;color:#858585;">2200</div>
<div class="t" style="left:466px;top:675px;font-size:13.00px;letter-spacing:0.023px;color:#858585;">test</div>
<div class="t" style="left:866px;top:675px;font-size:12.55px;letter-spacing:-0.307px;color:#858585;">5.500%</div>
<div class="t" style="left:961px;top:675px;font-size:13.00px;letter-spacing:0.000px;color:#858585;width:154px;text-align:right;margin-left:0.000px;">27.50</div>
<div class="t i" style="left:1126px;top:675px;font-size:12.79px;letter-spacing:-0.111px;color:#858585;">brst@pinus.ch</div>
<div class="row o" style="top:698px"></div>
<div class="a" style="left:162px;top:699px;width:1px;height:28px;background:#e2e2e2"></div>
<div class="a" style="left:272px;top:699px;width:1px;height:28px;background:#e2e2e2"></div>
<div class="a" style="left:342px;top:699px;width:1px;height:28px;background:#e2e2e2"></div>
<div class="a" style="left:412px;top:699px;width:1px;height:28px;background:#e2e2e2"></div>
<div class="a" style="left:460px;top:699px;width:1px;height:28px;background:#e2e2e2"></div>
<div class="a" style="left:860px;top:699px;width:1px;height:28px;background:#e2e2e2"></div>
<div class="a" style="left:960px;top:699px;width:1px;height:28px;background:#e2e2e2"></div>
<div class="a" style="left:1120px;top:699px;width:1px;height:28px;background:#e2e2e2"></div>
<div class="t" style="left:82px;top:704px;font-size:12.94px;letter-spacing:-0.031px;color:#363636;">16.07.2025</div>
<div class="t" style="left:162px;top:704px;font-size:13.00px;letter-spacing:0.000px;color:#363636;width:110px;text-align:center;padding-left:0.000px;">2</div>
<div class="t" style="left:278px;top:704px;font-size:12.79px;letter-spacing:-0.154px;color:#363636;">1020</div>
<div class="t" style="left:348px;top:704px;font-size:12.79px;letter-spacing:-0.154px;color:#363636;">3000</div>
<div class="t" style="left:466px;top:704px;font-size:13.00px;letter-spacing:0.023px;color:#363636;">test</div>
<div class="t" style="left:866px;top:704px;font-size:13.00px;letter-spacing:41.000px;color:#363636;"></div>
<div class="t" style="left:961px;top:704px;font-size:13.00px;letter-spacing:0.000px;color:#363636;width:154px;text-align:right;margin-left:0.000px;">500.00</div>
<div class="t i" style="left:1126px;top:704px;font-size:12.79px;letter-spacing:-0.111px;color:#363636;">brst@pinus.ch</div>
<div class="row e" style="top:727px"></div>
<div class="a" style="left:162px;top:728px;width:1px;height:28px;background:#e2e2e2"></div>
<div class="a" style="left:272px;top:728px;width:1px;height:28px;background:#e2e2e2"></div>
<div class="a" style="left:342px;top:728px;width:1px;height:28px;background:#e2e2e2"></div>
<div class="a" style="left:412px;top:728px;width:1px;height:28px;background:#e2e2e2"></div>
<div class="a" style="left:460px;top:728px;width:1px;height:28px;background:#e2e2e2"></div>
<div class="a" style="left:860px;top:728px;width:1px;height:28px;background:#e2e2e2"></div>
<div class="a" style="left:960px;top:728px;width:1px;height:28px;background:#e2e2e2"></div>
<div class="a" style="left:1120px;top:728px;width:1px;height:28px;background:#e2e2e2"></div>
<div class="t" style="left:82px;top:733px;font-size:12.94px;letter-spacing:-0.031px;color:#363636;">16.07.2025</div>
<div class="t" style="left:162px;top:733px;font-size:13.00px;letter-spacing:0.000px;color:#363636;width:110px;text-align:center;padding-left:0.000px;">1</div>
<div class="t" style="left:278px;top:733px;font-size:12.79px;letter-spacing:-0.154px;color:#363636;">1020</div>
<div class="t" style="left:348px;top:733px;font-size:12.79px;letter-spacing:-0.154px;color:#363636;">3000</div>
<div class="t" style="left:466px;top:733px;font-size:13.00px;letter-spacing:0.023px;color:#363636;">test</div>
<div class="t" style="left:866px;top:733px;font-size:13.00px;letter-spacing:41.000px;color:#363636;"></div>
<div class="t" style="left:961px;top:733px;font-size:13.00px;letter-spacing:0.000px;color:#363636;width:154px;text-align:right;margin-left:0.000px;">500.00</div>
<div class="t i" style="left:1126px;top:733px;font-size:12.79px;letter-spacing:-0.111px;color:#363636;">brst@pinus.ch</div>
<div class="row o" style="top:756px"></div>
<div class="a" style="left:162px;top:757px;width:1px;height:28px;background:#e2e2e2"></div>
<div class="a" style="left:272px;top:757px;width:1px;height:28px;background:#e2e2e2"></div>
<div class="a" style="left:342px;top:757px;width:1px;height:28px;background:#e2e2e2"></div>
<div class="a" style="left:412px;top:757px;width:1px;height:28px;background:#e2e2e2"></div>
<div class="a" style="left:460px;top:757px;width:1px;height:28px;background:#e2e2e2"></div>
<div class="a" style="left:860px;top:757px;width:1px;height:28px;background:#e2e2e2"></div>
<div class="a" style="left:960px;top:757px;width:1px;height:28px;background:#e2e2e2"></div>
<div class="a" style="left:1120px;top:757px;width:1px;height:28px;background:#e2e2e2"></div>
<div class="t" style="left:82px;top:762px;font-size:12.94px;letter-spacing:-0.031px;color:#858585;">16.07.2025</div>
<div class="t" style="left:162px;top:762px;font-size:13.00px;letter-spacing:0.000px;color:#858585;width:110px;text-align:center;padding-left:0.000px;">1</div>
<div class="t" style="left:278px;top:762px;font-size:12.79px;letter-spacing:-0.154px;color:#858585;">3000</div>
<div class="t" style="left:348px;top:762px;font-size:12.79px;letter-spacing:-0.154px;color:#858585;">2200</div>
<div class="t" style="left:466px;top:762px;font-size:13.00px;letter-spacing:0.023px;color:#858585;">test</div>
<div class="t" style="left:866px;top:762px;font-size:12.55px;letter-spacing:-0.307px;color:#858585;">5.500%</div>
<div class="t" style="left:961px;top:762px;font-size:13.00px;letter-spacing:0.000px;color:#858585;width:154px;text-align:right;margin-left:0.000px;">27.50</div>
<div class="t i" style="left:1126px;top:762px;font-size:12.79px;letter-spacing:-0.111px;color:#858585;">brst@pinus.ch</div>
<div class="row e" style="top:785px"></div>
<div class="a" style="left:162px;top:786px;width:1px;height:28px;background:#e2e2e2"></div>
<div class="a" style="left:272px;top:786px;width:1px;height:28px;background:#e2e2e2"></div>
<div class="a" style="left:342px;top:786px;width:1px;height:28px;background:#e2e2e2"></div>
<div class="a" style="left:412px;top:786px;width:1px;height:28px;background:#e2e2e2"></div>
<div class="a" style="left:460px;top:786px;width:1px;height:28px;background:#e2e2e2"></div>
<div class="a" style="left:860px;top:786px;width:1px;height:28px;background:#e2e2e2"></div>
<div class="a" style="left:960px;top:786px;width:1px;height:28px;background:#e2e2e2"></div>
<div class="a" style="left:1120px;top:786px;width:1px;height:28px;background:#e2e2e2"></div>
<div class="a" style="left:75px;top:146px;width:1158px;height:1px;background:#a8a8a8"></div>
<div class="a" style="left:75px;top:146px;width:2px;height:645px;background:#9a9a9a"></div>
<div class="a" style="left:77px;top:175px;width:1156px;height:1px;background:#a8a8a8"></div>
<div class="a" style="left:162px;top:147px;width:1px;height:28px;background:#d0d0d0"></div>
<div class="a" style="left:272px;top:147px;width:1px;height:28px;background:#d0d0d0"></div>
<div class="a" style="left:342px;top:147px;width:1px;height:28px;background:#d0d0d0"></div>
<div class="a" style="left:412px;top:147px;width:1px;height:28px;background:#d0d0d0"></div>
<div class="a" style="left:460px;top:147px;width:1px;height:28px;background:#d0d0d0"></div>
<div class="a" style="left:860px;top:147px;width:1px;height:28px;background:#d0d0d0"></div>
<div class="a" style="left:960px;top:147px;width:1px;height:28px;background:#d0d0d0"></div>
<div class="a" style="left:1120px;top:147px;width:1px;height:28px;background:#d0d0d0"></div>
<div class="t b" style="left:82px;top:153px;font-size:12.48px;letter-spacing:-0.404px;">Datum</div>
<div class="t b" style="left:277px;top:153px;font-size:12.60px;letter-spacing:-0.250px;">Konto 1</div>
<div class="t b" style="left:348px;top:153px;font-size:12.60px;letter-spacing:-0.250px;">Konto 2</div>
<div class="t b" style="left:466px;top:153px;font-size:12.48px;letter-spacing:-0.343px;">Text</div>
<div class="t b" style="left:866px;top:153px;font-size:12.48px;letter-spacing:-0.356px;">Satz</div>
<div class="t b" style="left:1126px;top:153px;font-size:12.48px;letter-spacing:-0.318px;">Benutzer</div>
<div class="t b" style="left:162px;top:153px;font-size:12.48px;letter-spacing:-0.354px;width:110px;text-align:center;padding-left:-0.354px;">Beleg</div>
<div class="t b" style="left:961px;top:153px;font-size:12.48px;letter-spacing:-0.330px;width:154px;text-align:right;margin-left:-0.330px;">Betrag</div>
<div class="a" style="left:360px;top:113px;width:808px;height:627px;background:#fafafa;border:1px solid #d3e0e0;box-shadow:2px 3px 7px rgba(0,0,0,.32)"></div>
<div class="a" style="left:361px;top:114px;width:806px;height:29px;background:#9b9b9b"></div>
<div class="t" style="left:370px;top:121px;font-size:12.80px;letter-spacing:-0.137px;color:#fff;-webkit-text-stroke:.25px #fff;">Buchen</div>
<svg class="a" style="left:1144px;top:123px;" width="12" height="11" viewBox="0 0 12 11"><path d="M1.700 1.400l8.600 8.200M10.300 1.400l-8.600 8.200" stroke="#555" stroke-width="3" stroke-linecap="butt"/></svg>
<div class="t" style="left:373px;top:146px;font-size:12.45px;letter-spacing:-0.311px;">Vorlagen</div>
<div class="sel" style="left:373px;top:165px;width:350px;height:24px;border-color:#c8c8c8;background:#fff"></div>
<div class="car" style="left:706px;top:175px;border-top-color:#444"></div>
<div class="ib" style="left:728px;top:158px"></div>
<div class="ib" style="left:766px;top:158px"></div>
<div class="ib" style="left:817px;top:158px"></div>
<div class="a" style="left:871px;top:159px;width:118px;height:34px;background:#9b9b9b;border-radius:3px;box-shadow:0 1px 1px rgba(0,0,0,.2)"></div>
<div class="t" style="left:871px;top:168px;font-size:14.94px;letter-spacing:-0.039px;color:#fff;width:118px;text-align:center;padding-left:-0.039px;-webkit-text-stroke:.35px #fff;">Abbrechen</div>
<div class="a" style="left:995px;top:159px;width:118px;height:34px;background:#02509e;border-radius:3px;box-shadow:0 1px 1px rgba(0,0,0,.3)"></div>
<div class="t" style="left:995px;top:168px;font-size:14.86px;letter-spacing:-0.081px;color:#fff;width:118px;text-align:center;padding-left:-0.081px;-webkit-text-stroke:.35px #fff;">Verbuchen</div>
<div class="t b" style="left:1138px;top:158px;font-size:16.50px;letter-spacing:0.000px;color:#222;">?</div>
<div class="a" style="left:371px;top:203px;width:129px;height:28px;background:#6ab04c;border-radius:4px 4px 0 0"></div>
<div class="a" style="left:361px;top:230px;width:806px;height:3px;background:#6ab04c"></div>
<div class="t b" style="left:381px;top:209px;font-size:12.59px;letter-spacing:-0.231px;color:#fff;">Buchen Deb./Kred.</div>
<div class="t b" style="left:515px;top:209px;font-size:12.63px;letter-spacing:-0.239px;color:#cdcdcd;">Sammelbeleg</div>
<div class="t b" style="left:619px;top:209px;font-size:12.46px;letter-spacing:-0.325px;color:#cdcdcd;">Buchen Zahlung</div>
<div class="a" style="left:361px;top:233px;width:1px;height:330px;background:#b4b4b4"></div>
<div class="a" style="left:361px;top:562px;width:806px;height:1px;background:#b0b0b0"></div>
<div class="t" style="left:370px;top:256px;font-size:12.42px;letter-spacing:-0.355px;">Sammelbeleg</div>
<div class="sel" style="left:490px;top:255px;width:297px;height:24px;border-color:#c8c8c8;background:#fff"></div>
<div class="t b" style="left:496px;top:259px;font-size:11.79px;letter-spacing:-0.483px;color:#2a2a2a;">Keine</div>
<div class="car" style="left:770px;top:265px;border-top-color:#444"></div>
<div class="t" style="left:864px;top:238px;font-size:12.54px;letter-spacing:-0.221px;">Hilfestellung Buchungssatz</div>
<div class="sel" style="left:864px;top:255px;width:247px;height:24px;border-color:#c8c8c8;background:#fff"></div>
<div class="t b i" style="left:870px;top:259px;font-size:11.90px;letter-spacing:-0.316px;color:#2a2a2a;">**Freies Buchen**</div>
<div class="car" style="left:1094px;top:265px;border-top-color:#444"></div>
<div class="t" style="left:370px;top:292px;font-size:12.39px;letter-spacing:-0.448px;">Datum</div>
<div class="sel" style="left:490px;top:289px;width:110px"></div>
<div class="t b" style="left:496px;top:293px;font-size:12.39px;letter-spacing:-0.059px;">01.01.2025</div>
<div class="sel" style="left:599px;top:289px;width:31px"></div>
<div class="t" style="left:370px;top:332px;font-size:12.38px;letter-spacing:-0.286px;">Konto Nr.1 (Soll)</div>
<div class="sel" style="left:490px;top:328px;width:370px;height:24px;border-color:#c8c8c8;background:#fff"></div>
<div class="t b" style="left:496px;top:332px;font-size:11.98px;letter-spacing:-0.268px;color:#2a2a2a;">1020 - Kontokorrent A</div>
<div class="car" style="left:843px;top:338px;border-top-color:#444"></div>
<div class="t" style="left:370px;top:363px;font-size:12.38px;letter-spacing:-0.315px;">Konto Nr.2 (Haben)</div>
<div class="sel" style="left:490px;top:359px;width:370px;height:24px;border-color:#c8c8c8;background:#fff"></div>
<div class="t b" style="left:496px;top:363px;font-size:11.95px;letter-spacing:-0.275px;color:#2a2a2a;">3000 - Bruttoerlöse Erzeugnis A</div>
<div class="car" style="left:843px;top:369px;border-top-color:#444"></div>
<div class="ro" style="left:864px;top:328px;width:98px"></div>
<div class="t" style="left:864px;top:331px;font-size:11.83px;letter-spacing:-0.090px;color:#7a7a7a;width:94px;text-align:right;margin-left:-0.090px;">4'845.00</div>
<div class="ro" style="left:965px;top:328px;width:146px"></div>
<div class="t" style="left:969px;top:331px;font-size:12.42px;letter-spacing:-0.410px;color:#7a7a7a;">Zunahme</div>
<div class="ro" style="left:864px;top:359px;width:98px"></div>
<div class="t" style="left:864px;top:362px;font-size:11.83px;letter-spacing:-0.090px;color:#7a7a7a;width:94px;text-align:right;margin-left:-0.090px;">3'094.03</div>
<div class="ro" style="left:965px;top:359px;width:146px"></div>
<div class="t" style="left:969px;top:362px;font-size:12.33px;letter-spacing:-0.362px;color:#7a7a7a;">Ertrag</div>
<div class="ib" style="left:1114px;top:336px"></div>
<div class="t" style="left:370px;top:403px;font-size:12.42px;letter-spacing:-0.361px;">Belegnummer</div>
<div class="sel" style="left:490px;top:399px;width:110px"></div>
<div class="t b" style="left:490px;top:403px;font-size:11.99px;letter-spacing:-0.010px;width:110px;text-align:center;padding-left:-0.010px;">12</div>
<div class="ro" style="left:604px;top:400px;width:256px"></div>
<div class="t" style="left:608px;top:403px;font-size:12.50px;letter-spacing:-0.266px;color:#8a8a8a;">Belegnummer automatisch erhöhen</div>
<div class="ib" style="left:864px;top:392px"></div>
<div class="t" style="left:490px;top:437px;font-size:12.51px;letter-spacing:-0.267px;">Buchungstext</div>
<div class="t" style="left:370px;top:461px;font-size:12.20px;letter-spacing:-0.786px;">Was</div>
<div class="sel" style="left:490px;top:457px;width:370px;height:24px;border-color:#c8c8c8;background:#fff"></div>
<div class="t b" style="left:496px;top:461px;font-size:11.72px;letter-spacing:-0.461px;color:#2a2a2a;">Ertrag</div>
<div class="car" style="left:843px;top:467px;border-top-color:#444"></div>
<div class="t" style="left:370px;top:489px;font-size:12.04px;letter-spacing:-0.874px;">Wer</div>
<div class="sel" style="left:490px;top:485px;width:370px;height:24px;border-color:#c8c8c8;background:#fff"></div>
<div class="car" style="left:843px;top:495px;border-top-color:#444"></div>
<div class="ib" style="left:864px;top:465px"></div>
<div class="ib" style="left:902px;top:465px"></div>
<div class="ib" style="left:956px;top:465px"></div>
<div class="t" style="left:370px;top:531px;font-size:12.23px;letter-spacing:-0.418px;">Betrag (CHF)</div>
<div class="sel" style="left:490px;top:527px;width:110px"></div>
<div class="t b" style="left:490px;top:531px;font-size:12.00px;letter-spacing:0.136px;width:104px;text-align:right;margin-left:0.136px;">500.00</div>
<div class="sel" style="left:606px;top:528px;width:76px;height:22px;border-color:#e6e6e6;background:#fafafa"></div>
<div class="t" style="left:612px;top:531px;font-size:12.72px;letter-spacing:-0.151px;color:#bdbdbd;">Brutto</div>
<div class="car" style="left:665px;top:537px;border-top-color:#c4c4c4"></div>
<div class="sel" style="left:691px;top:527px;width:116px;height:24px;border-color:#c8c8c8;background:#fff"></div>
<div class="t b" style="left:697px;top:531px;font-size:11.77px;letter-spacing:-0.410px;color:#2a2a2a;">CHF | Franken</div>
<div class="car" style="left:790px;top:537px;border-top-color:#444"></div>
<div class="t" style="left:417px;top:572px;font-size:12.52px;letter-spacing:-0.239px;">Bruttobetrag</div>
<div class="t b" style="left:549px;top:571px;font-size:12.00px;letter-spacing:0.156px;color:#000;">500.00</div>
<div class="t" style="left:645px;top:572px;font-size:12.51px;letter-spacing:-0.256px;">Nettobetrag</div>
<div class="t b" style="left:771px;top:571px;font-size:12.00px;letter-spacing:0.136px;color:#000;">472.50</div>
<div class="t" style="left:861px;top:572px;font-size:12.43px;letter-spacing:-0.297px;">Steuerbetrag</div>
<div class="t b" style="left:1000px;top:571px;font-size:12.00px;letter-spacing:0.060px;color:#000;">27.50</div>
<div class="a" style="left:364px;top:591px;width:800px;height:146px;border:1px solid #b4b4b4;border-top:none"></div>
<div class="t" style="left:370px;top:607px;font-size:12.49px;letter-spacing:-0.267px;">Mwst Konto Nr.</div>
<div class="sel" style="left:492px;top:598px;width:394px;height:24px;border-color:#c8c8c8;background:#fff"></div>
<div class="t" style="left:498px;top:602px;font-size:12.48px;letter-spacing:-0.263px;color:#2a2a2a;">2200 - Mwst: Umsatzsteuer</div>
<div class="t" style="left:626px;top:636px;font-size:12.53px;letter-spacing:-0.231px;">Abzüge /Andere Mittel</div>
<div class="t b" style="left:608px;top:654px;font-size:16.50px;letter-spacing:0.000px;color:#222;">?</div>
<div class="sel" style="left:627px;top:653px;width:258px;height:24px;border-color:#c8c8c8;background:#fff"></div>
<div class="t" style="left:633px;top:657px;font-size:12.34px;letter-spacing:-0.325px;color:#2a2a2a;">(323) 1. Satz 5.500%</div>
<div class="car" style="left:868px;top:663px;border-top-color:#444"></div>
<div class="a" style="left:371px;top:662px;width:13px;height:13px;border:2px solid #6ab04c;border-radius:50%;background:#fff"></div>
<div class="a" style="left:375px;top:666px;width:5px;height:5px;border-radius:50%;background:#6ab04c"></div>
<div class="t" style="left:391px;top:661px;font-size:12.48px;letter-spacing:-0.286px;">Saldosatz</div>
<div class="a" style="left:371px;top:682px;width:12px;height:12px;border:1px solid #6ab04c;border-radius:2px;background:#fff"></div>
<div class="t" style="left:391px;top:681px;font-size:12.50px;letter-spacing:-0.251px;">(235) Entgeltsminderungen</div>
<div class="t" style="left:370px;top:708px;font-size:12.34px;letter-spacing:-0.410px;color:#cbc3d1;">Kürzung</div>
<div class="sel" style="left:490px;top:700px;width:395px;height:24px;border-color:#e6e6e6;background:#fafafa"></div>
<div class="t" style="left:496px;top:704px;font-size:12.25px;letter-spacing:-0.439px;color:#bdbdbd;">Ohne Kürzung</div>
<div class="car" style="left:868px;top:710px;border-top-color:#c8c8c8"></div>
<div class="t" style="left:1027px;top:681px;font-size:12.51px;letter-spacing:-0.263px;color:#cfcbd3;">Pauschalbetrag</div>
<div class="a" style="left:1020px;top:700px;width:127px;height:24px;border:1px solid #ebebeb;background:#fafafa"></div>
<div class="t" style="left:1040px;top:704px;font-size:11.84px;letter-spacing:-0.107px;color:#cfcfcf;width:101px;text-align:right;margin-left:-0.107px;">0.00</div>
<div class="t" style="left:891px;top:636px;font-size:12.45px;letter-spacing:-0.293px;">Gültig Datum</div>
<div class="a" style="left:892px;top:677px;width:131px;height:49px;background:#fff;box-shadow:0 1px 5px rgba(0,0,0,.55)"></div>
<div class="a" style="left:892px;top:677px;width:131px;height:25px;background:#e6e6e6"></div>
<div class="t" style="left:903px;top:682px;font-size:11.98px;letter-spacing:-0.009px;">01.01.2025</div>
<div class="t" style="left:903px;top:706px;font-size:11.98px;letter-spacing:-0.009px;">01.01.2024</div>
<div class="a" style="left:891px;top:652px;width:132px;height:26px;background:#fff;border:2px solid #8fd36b"></div>
<div class="t" style="left:898px;top:657px;font-size:11.98px;letter-spacing:-0.009px;">01.01.2025</div>
<div class="car" style="left:1005px;top:663px"></div>
<div class="a" style="left:883px;top:630px;width:152px;height:103px;border:2px solid #f20d0d;filter:drop-shadow(3px 3px 2px rgba(0,0,0,.42))"></div>
<svg class="a" style="left:592px;top:60px;" width="14" height="16" viewBox="0 0 14 16"><path d="M4.500 0h5l.6.900H14v2H0v-2h3.900zM1 4h12l-.8 11a1 1 0 0 1-1 1H2.800a1 1 0 0 1-1-1z" fill="#6ab04c"/><path d="M7 5.700l3.600 3.800H8.300V14H5.700V9.500H3.400z" fill="#fff"/></svg>
<svg class="a" style="left:739px;top:169px;" width="14" height="14" viewBox="0 0 14 14"><path d="M7 1.700v10.600M1.700 7h10.600" stroke="#6ab04c" stroke-width="3.400" stroke-linecap="round" fill="none"/></svg>
<svg class="a" style="left:777px;top:169px;" width="14" height="14" viewBox="0 0 14 14"><path d="M1.800 7h10.400" stroke="#6ab04c" stroke-width="3.600" stroke-linecap="round" fill="none"/></svg>
<svg class="a" style="left:829px;top:168px;" width="12" height="16" viewBox="0 0 12 16"><path d="M0 0h7.200v4.800H12V16H0z" fill="#6ab04c"/><path d="M8.400 0L12 3.600H8.400z" fill="#6ab04c"/></svg>
<svg class="a" style="left:1128px;top:346px;" width="8" height="16" viewBox="0 0 8 16"><path d="M4 0l4 4.300H5.400v7.400H8L4 16 0 11.700h2.600V4.300H0z" fill="#6ab04c"/></svg>
<svg class="a" style="left:875px;top:403px;" width="14" height="14" viewBox="0 0 14 14"><path d="M13.500 7H1.800M7.300 1L1.300 7l6 6" stroke="#6ab04c" stroke-width="2" fill="none" stroke-linecap="round" stroke-linejoin="round"/></svg>
<svg class="a" style="left:875px;top:476px;" width="14" height="14" viewBox="0 0 14 14"><path d="M7 1.700v10.600M1.700 7h10.600" stroke="#6ab04c" stroke-width="3.400" stroke-linecap="round" fill="none"/></svg>
<svg class="a" style="left:913px;top:476px;" width="14" height="14" viewBox="0 0 14 14"><path d="M1.800 7h10.400" stroke="#6ab04c" stroke-width="3.600" stroke-linecap="round" fill="none"/></svg>
<svg class="a" style="left:970px;top:475px;" width="8" height="16" viewBox="0 0 8 16"><path d="M4 0l4 4.300H5.400v7.400H8L4 16 0 11.700h2.600V4.300H0z" fill="#6ab04c"/></svg>
<svg class="a" style="left:610px;top:293px;" width="15" height="16" viewBox="0 0 15 16"><rect x=".5" y="3.500" width="14" height="12" fill="#fff" stroke="#444" stroke-width="1"/><rect x="0" y="3" width="15" height="3" fill="#444"/><rect x="3.6" y="6" width=".8" height="9.500" fill="#777"/><rect x="7.1" y="6" width=".8" height="9.500" fill="#777"/><rect x="10.6" y="6" width=".8" height="9.500" fill="#777"/><rect x="1" y="8.6" width="13" height=".8" fill="#777"/><rect x="1" y="11.6" width="13" height=".8" fill="#777"/><rect x="3" y="0" width="2.600" height="4.500" rx="1.300" fill="#fff" stroke="#444" stroke-width=".9"/><rect x="9.400" y="0" width="2.600" height="4.500" rx="1.300" fill="#fff" stroke="#444" stroke-width=".9"/></svg>
<svg class="a" style="left:1010px;top:665.6px;" width="21" height="26" viewBox="0 0 21 26"><path d="M6.300 15.500V2.600a1.850 1.850 0 0 1 3.700 0V8.200a1.600 1.600 0 0 1 3.100.300V9.300a1.600 1.600 0 0 1 3.100.400v.900a1.500 1.500 0 0 1 2.900.500v5.400c0 2.300-.9 3.200-1.600 4.600-.5 1-1.300 3.400-4.600 3.400h-1.800c-2.400 0-3.600-1.300-4.700-2.900L1.500 15.600c-.8-1.200.6-2.600 2-1.700z" fill="#fff" stroke="#1c1c2e" stroke-width="1.150" stroke-linejoin="round"/><path d="M10 8.200v4.500M13.100 9.300v3.400M16.200 10.200v2.600" stroke="#1c1c2e" stroke-width="1.100" fill="none"/></svg>
</body></html>
